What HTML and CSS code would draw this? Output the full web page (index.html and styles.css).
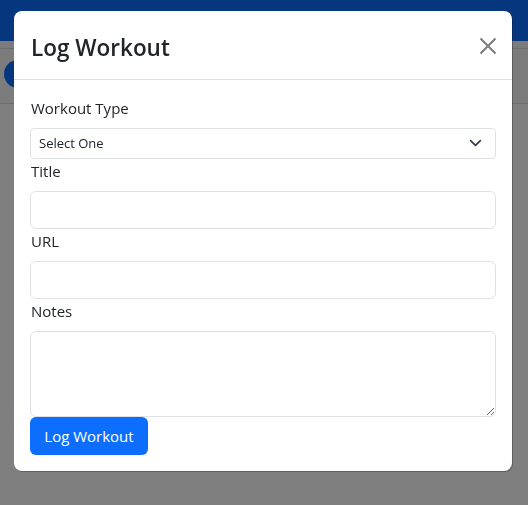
FILE: index.html
```html
<!DOCTYPE html>
<html lang="en">
<head>
<meta charset="utf-8">
<title>Log Workout</title>
<link rel="stylesheet" href="styles.css">
</head>
<body>
<header class="navbar"></header>
<div class="subbar">
  <div class="subbar-line"></div>
  <div class="subbar-row"><span class="avatar"></span></div>
</div>
<main class="page"></main>

<div class="backdrop"></div>
<div class="modal" role="dialog" aria-labelledby="modal-title">
  <div class="modal-header">
    <h3 class="modal-title" id="modal-title">Log Workout</h3>
    <button class="btn-close" type="button" aria-label="Close">
      <svg width="18" height="18" viewBox="0 0 18 18"><path d="M1.5 1.5 16.5 16.5M16.5 1.5 1.5 16.5" stroke="currentColor" stroke-width="2" fill="none"/></svg>
    </button>
  </div>
  <form class="modal-body">
    <label class="form-label" for="type">Workout Type</label>
    <div class="select-wrap">
      <select class="form-select" id="type"><option>Select One</option></select>
      <svg class="chevron" width="16" height="12" viewBox="0 2 16 12"><path d="m2 5 6 6 6-6" stroke="#343a40" stroke-width="2" stroke-linecap="round" stroke-linejoin="round" fill="none"/></svg>
    </div>
    <label class="form-label" for="title">Title</label>
    <input class="form-control" id="title" type="text">
    <label class="form-label" for="url">URL</label>
    <input class="form-control" id="url" type="text">
    <label class="form-label" for="notes">Notes</label>
    <textarea class="form-control textarea" id="notes" rows="3"></textarea>
    <div class="actions"><button class="btn-primary" type="button">Log Workout</button></div>
  </form>
</div>
</body>
</html>
```
FILE: styles.css
```css
* { box-sizing: border-box; }
html, body { margin: 0; height: 100%; }
body {
  font-family: "Open Sans", "Noto Sans", sans-serif;
  color: #212529;
  background: #fff;
  overflow: hidden;
}
.navbar { height: 41px; background: #0d6efd; }
.subbar { background: #f8f9fa; border-bottom: 1px solid #d8dadc; height: 63px; }
.subbar-line { height: 8px; border-bottom: 1px solid #d8dadc; }
.subbar-row { display: flex; align-items: center; height: 53px; padding-left: 4px; }
.avatar { width: 28px; height: 28px; border-radius: 50%; background: #0d6efd; margin-top: -4px; }
.backdrop { position: fixed; inset: 0; background: rgba(0,0,0,.5); }
.modal {
  position: fixed;
  top: 11px;
  left: 14px;
  width: 498px;
  background: #fff;
  border-radius: 8px;
  box-shadow: 1px 1px 0 rgba(0,0,0,.25);
}
.modal-header {
  display: flex;
  align-items: center;
  justify-content: space-between;
  padding: 16px;
  border-bottom: 1px solid #dee2e6;
  height: 69px;
}
.modal-title { margin: 5px 0 0; font-size: 22.5px; font-weight: 600; line-height: 36px; padding-left: 1px; }
.btn-close {
  border: 0; background: none; padding: 0; width: 24px; height: 24px;
  display: flex; align-items: center; justify-content: center;
  color: #7b7b7b; margin-right: -4px; margin-top: 2px;
}
.modal-body { display: flex; flex-direction: column; padding: 16px; }
.form-label { font-size: 15px; line-height: 24px; margin-bottom: 8px; padding-left: 1px; }
.select-wrap { position: relative; }
.form-select {
  appearance: none; -webkit-appearance: none;
  width: 100%; height: 31px;
  padding: 0 36px 0 8px;
  font: 13px/21px "Open Sans", "Noto Sans", sans-serif;
  color: #212529; background: #fff;
  border: 1px solid #dee2e6; border-radius: 4px;
}
.chevron { position: absolute; right: 14px; top: 10px; pointer-events: none; width: 13px; height: 10px; }
.form-control {
  width: 100%; height: 38px;
  border: 1px solid #dee2e6; border-radius: 6px;
  font: 15px/24px "Open Sans", "Noto Sans", sans-serif;
  padding: 6px 12px; margin-bottom: 0;
}
.textarea { height: 86px; resize: vertical; display: block; }
.actions { display: flex; }
.btn-primary {
  height: 38px; width: 118px;
  background: #0d6efd; color: #fff; border: 0; border-radius: 6px;
  font: 500 15px/24px "Open Sans", "Noto Sans", sans-serif;
  padding: 0 12px;
}
```
